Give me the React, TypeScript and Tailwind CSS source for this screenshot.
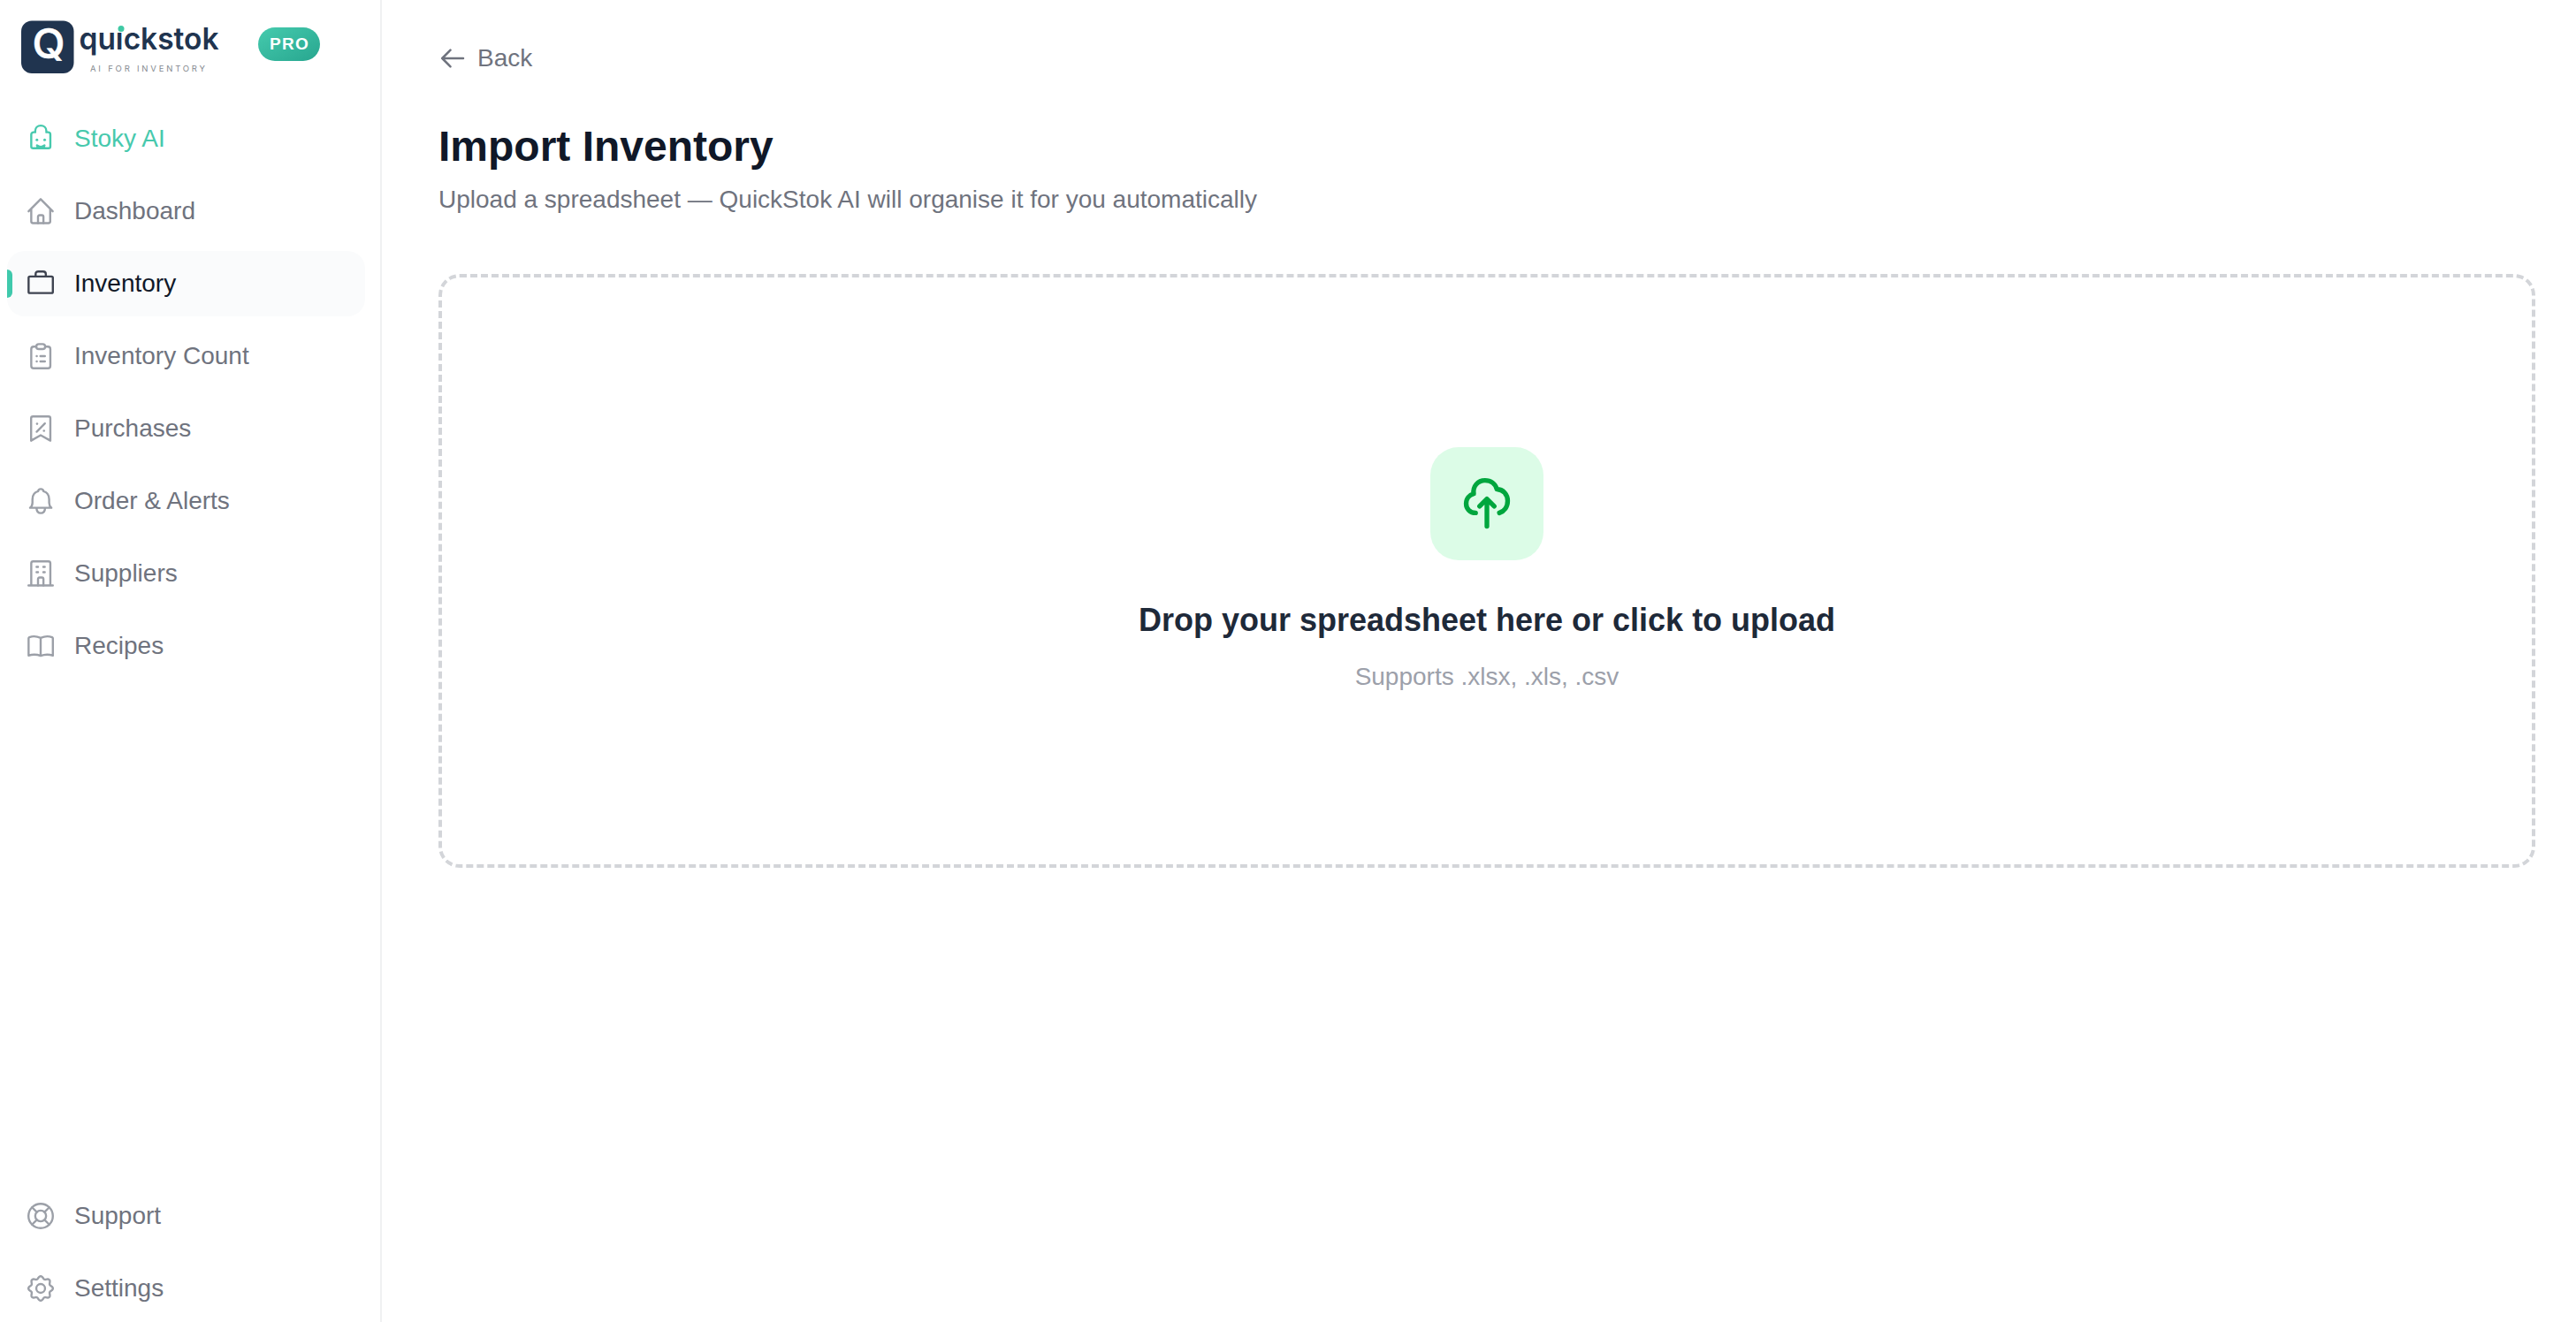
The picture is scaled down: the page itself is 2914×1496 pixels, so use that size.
import type { ReactNode } from "react";

const gearPath =
  Array.from({ length: 96 }, (_, i) => {
    const angle = (i / 96) * Math.PI * 2;
    const radius = 8.3 + 0.95 * Math.cos(angle * 8);
    const x = (12 + radius * Math.sin(angle)).toFixed(2);
    const y = (12 - radius * Math.cos(angle)).toFixed(2);
    return `${i === 0 ? "M" : "L"}${x} ${y}`;
  }).join("") + "Z";

const icons: Record<string, ReactNode> = {
  stoky: (
    <>
      <path d="M7.9 7.1v-.9c0-2.5 1.8-4.1 4.2-4.1s4.2 1.6 4.2 4.1v.9h1.2c1 0 1.8.6 1.8 1.7v9c0 .9-.6 1.4-1.5 1.4H6.4c-.9 0-1.5-.5-1.5-1.4v-9c0-1.1.8-1.7 1.8-1.7z" />
      <path d="M9.2 17c1.6 1.3 4.1 1.3 5.7 0M9.4 18.4h5.3" />
      <circle cx="9.2" cy="12.9" r="1" fill="currentColor" stroke="none" />
      <circle cx="15" cy="12.9" r="1" fill="currentColor" stroke="none" />
    </>
  ),
  home: (
    <>
      <path d="M2.9 12.1 12 2.9l9.1 9.2M4.9 10.5v9.2c0 .9.5 1.3 1.3 1.3h11.7c.8 0 1.3-.4 1.3-1.3v-9.2" />
      <path d="M10 21v-4.7c0-.8.4-1.3 1.2-1.3h1.7c.8 0 1.2.5 1.2 1.3V21" />
    </>
  ),
  briefcase: (
    <>
      <rect x="2.9" y="6.6" width="18.3" height="12.5" rx="1" />
      <path d="M8.2 6.4V4.8c0-1.3.8-2 2-2h3.7c1.2 0 2 .7 2 2v1.6" />
    </>
  ),
  clipboard: (
    <>
      <path d="M8.6 4.8H6.7c-1.1 0-1.8.7-1.8 1.8v12.8c0 1.1.7 1.8 1.8 1.8h10.8c1.1 0 1.8-.7 1.8-1.8V6.6c0-1.1-.7-1.8-1.8-1.8h-1.9" />
      <rect x="8.7" y="2.9" width="6.7" height="3.8" rx="1.9" />
      <path d="M9 12h.1M9 16h.1M11.8 12h3.4M11.8 16h3.4" />
    </>
  ),
  bookmark: (
    <>
      <path d="M6.2 2.8h11.7c.8 0 1.4.5 1.4 1.4v16.9L12 17l-7.2 4.1V4.2c0-.9.6-1.4 1.4-1.4z" />
      <path d="m9 14.4 6.2-6.3" />
      <circle cx="9.3" cy="8.4" r=".85" fill="currentColor" stroke="none" />
      <circle cx="14.5" cy="13.6" r=".85" fill="currentColor" stroke="none" />
    </>
  ),
  bell: (
    <>
      <path d="M4 17.1h16.1c-1.1-1-1.7-2.1-1.7-3.8v-2.6c0-3-1.5-5.3-4.3-6.1C14 3.5 13.2 2.9 12.1 2.9s-1.9.6-2 1.7c-2.8.8-4.3 3.1-4.3 6.1v2.6c0 1.7-.6 2.8-1.8 3.8z" />
      <path d="M8.9 17.4c.1 2.2 1.3 3.7 3.2 3.7s3.1-1.5 3.2-3.7" />
    </>
  ),
  building: (
    <>
      <path d="M2.8 21h18.4M4.9 21V4.3c0-.9.6-1.5 1.5-1.5h11.4c.9 0 1.5.6 1.5 1.5V21" />
      <path d="M10 21v-4.7c0-.8.4-1.3 1.2-1.3h1.7c.8 0 1.2.5 1.2 1.3V21M8.9 7h1.1M14 7h1.1M8.9 11h1.1M14 11h1.1" />
    </>
  ),
  book: (
    <path d="M12 5.9c-2.7-1.2-6.2-1.4-8.5-.5-.4.2-.6.4-.6.8v13c2.9-1 6.3-.9 9.1.2 2.8-1.1 6.3-1.2 9.2-.2v-13c0-.4-.2-.6-.6-.8-2.3-.9-5.9-.7-8.6.5zv13.5" />
  ),
  support: (
    <>
      <circle cx="12" cy="12" r="9.2" />
      <circle cx="12" cy="12" r="4.1" />
      <path d="m5.5 5.5 3.6 3.6m5.8 5.8 3.6 3.6m0-13-3.6 3.6m-5.8 5.8-3.6 3.6" />
    </>
  ),
  settings: (
    <>
      <path d={gearPath} />
      <circle cx="12" cy="12" r="3.3" />
    </>
  ),
};

const mainNav = [
  { label: "Stoky AI", icon: "stoky", tone: "text-[#47c9ad]", iconTone: "text-[#47c9ad]" },
  { label: "Dashboard", icon: "home" },
  { label: "Inventory", icon: "briefcase", active: true },
  { label: "Inventory Count", icon: "clipboard" },
  { label: "Purchases", icon: "bookmark" },
  { label: "Order & Alerts", icon: "bell" },
  { label: "Suppliers", icon: "building" },
  { label: "Recipes", icon: "book" },
];

const footerNav = [
  { label: "Support", icon: "support" },
  { label: "Settings", icon: "settings" },
];

type NavItemProps = {
  label: string;
  icon: string;
  active?: boolean;
  tone?: string;
  iconTone?: string;
};

function NavItem({ label, icon, active, tone = "text-[#6f737e]", iconTone = "text-[#9ca0a8]" }: NavItemProps) {
  return (
    <a
      className={`relative flex h-[74px] items-center gap-5 overflow-hidden rounded-[20px] pl-5 text-[28px] ${
        active ? "bg-[#fafbfc] text-[#101828]" : tone
      }`}
    >
      {active && <span className="absolute left-0 top-[21px] h-8 w-1.5 rounded-r-md bg-[#3fc9ac]" />}
      <svg
        viewBox="0 0 24 24"
        className={`size-9 shrink-0 ${active ? "text-[#3f4451]" : iconTone}`}
        fill="none"
        stroke="currentColor"
        strokeWidth="1.6"
        strokeLinecap="round"
        strokeLinejoin="round"
      >
        {icons[icon]}
      </svg>
      <span>{label}</span>
    </a>
  );
}

function Logo() {
  return (
    <svg viewBox="0 0 228 64" className="h-16 w-[228px] [font-family:Inter,sans-serif]">
      <rect x="0" y="3.5" width="59.5" height="59.5" rx="12" fill="#20344f" />
      <text
        x="12.5"
        y="46"
        className="text-[46px] font-medium"
        fill="#fff"
        stroke="#fff"
        strokeWidth="0.6"
        textLength="37"
        lengthAdjust="spacingAndGlyphs"
      >
        Q
      </text>
      <text
        x="65.5"
        y="36"
        className="text-[34px] font-semibold"
        fill="#20344f"
        textLength="158"
        lengthAdjust="spacingAndGlyphs"
      >
        quick
        <tspan>stok</tspan>
      </text>
      {/* green dot over the i */}
      <rect x="107.5" y="7" width="10.5" height="9.8" fill="#fff" />
      <circle cx="113" cy="12.6" r="3.5" fill="#3fc9a4" />
      <text x="78" y="60.5" className="text-[9.5px]" fill="#85898f" textLength="130">
        AI FOR INVENTORY
      </text>
    </svg>
  );
}

function Sidebar() {
  return (
    <aside className="flex w-[432px] shrink-0 flex-col border-r-2 border-[#f0f1f2] pl-2 pr-[17px]">
      <div className="flex h-[120px] items-start pl-4 pt-5">
        <Logo />
        <span className="ml-10 mt-[11px] flex h-[38px] w-[70px] items-center justify-center rounded-full bg-linear-to-br from-[#45cbae] to-[#27a68f] pl-px text-[19px] font-bold tracking-[1.2px] text-white">
          PRO
        </span>
      </div>
      <nav className="flex flex-1 flex-col gap-2">
        {mainNav.map((item) => (
          <NavItem key={item.label} {...item} />
        ))}
      </nav>
      <nav className="flex flex-col gap-2 pb-px">
        {footerNav.map((item) => (
          <NavItem key={item.label} {...item} />
        ))}
      </nav>
    </aside>
  );
}

export default function App() {
  return (
    <div className="flex h-[1496px] w-[2914px] overflow-hidden bg-white font-['Liberation_Sans',Arial,sans-serif]">
      <Sidebar />
      <main className="flex-1 pl-16 pr-[46px] pt-[46px]">
        <button className="flex h-10 items-center gap-3 text-[28px] text-[#6f737e]">
          <svg
            viewBox="0 0 32 32"
            className="size-8"
            fill="none"
            stroke="currentColor"
            strokeWidth="2.5"
            strokeLinecap="round"
            strokeLinejoin="round"
          >
            <path d="M28 16H4.2M13.5 6.7 4.2 16l9.3 9.3" />
          </svg>
          Back
        </button>
        <h1 className="mt-[52px] text-[48px] leading-[56px] font-bold text-[#101828]">Import Inventory</h1>
        <p className="mt-3 text-[28px] leading-10 text-[#6f737e]">
          Upload a spreadsheet — QuickStok AI will organise it for you automatically
        </p>
        <div className="mt-16 flex h-[672px] flex-col items-center rounded-3xl border-4 border-dashed border-[#d3d5d9] pt-48">
          <div className="flex size-32 items-center justify-center rounded-[32px] bg-[#dcfce7]">
            <svg
              viewBox="0 0 24 24"
              className="size-16 text-[#00a63e]"
              fill="none"
              stroke="currentColor"
              strokeWidth="2"
              strokeLinecap="round"
              strokeLinejoin="round"
            >
              <path d="M7.2 15.9C4.8 15.9 3.2 14.1 3.2 12c0-2.2 1.4-3.7 3.2-4.2C5.9 4.7 8.1 2.1 11.2 2.1c2.5 0 4.4 1.5 5 3.7 2.7.1 4.6 2.3 4.6 5 0 2.5-1.4 4.4-3.5 5.1" />
              <path d="M12 21.6V10M8.9 13.1 12 10l3.1 3.1" />
            </svg>
          </div>
          <p className="mt-12 text-[36px] leading-10 font-bold text-[#1e2939]">
            Drop your spreadsheet here or click to upload
          </p>
          <p className="mt-6 text-[28px] leading-10 text-[#9ca0aa]">Supports .xlsx, .xls, .csv</p>
        </div>
      </main>
    </div>
  );
}
